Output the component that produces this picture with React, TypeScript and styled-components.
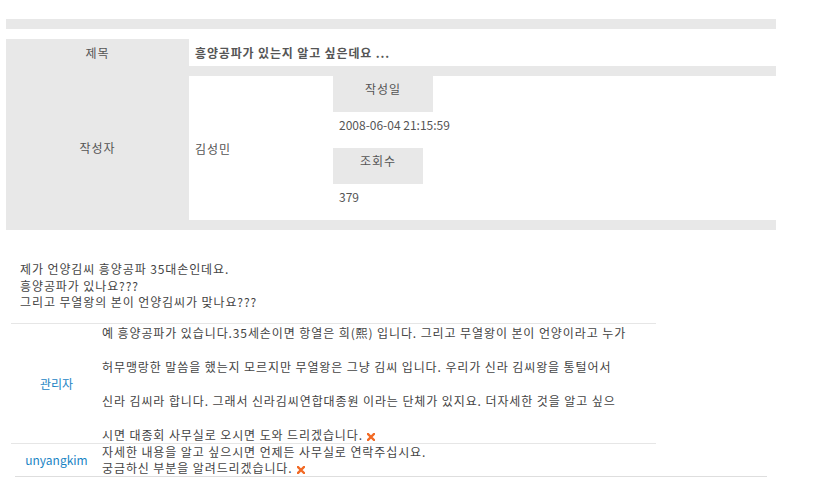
import React from "react";
import styled, { createGlobalStyle } from "styled-components";

const Global = createGlobalStyle`
  html, body { margin: 0; padding: 0; background: #fff; }
  body {
    font-family: "Noto Sans CJK KR", "Noto Sans", sans-serif;
    font-size: 12px;
    color: #444;
    letter-spacing: 0.9px;
  }
`;

const Page = styled.div`
  width: 815px;
  padding: 19px 0 0 6px;
  box-sizing: border-box;
`;

const TopBar = styled.div`
  width: 770px;
  height: 10px;
  background: #e8e8e8;
  margin-bottom: 10px;
`;

const InfoTable = styled.div`
  width: 770px;
  display: grid;
  grid-template-columns: 183px 1fr;
  grid-template-rows: 27px 10px 144px 10px;
  background: #e8e8e8;
`;

const Label = styled.div<{ $rows?: string }>`
  grid-column: 1;
  grid-row: ${(p) => p.$rows || "auto"};
  display: flex;
  align-items: center;
  justify-content: center;
  color: #555;
  line-height: 14px;
`;

const TitleCell = styled.div`
  grid-column: 2;
  grid-row: 1;
  background: #fff;
  display: flex;
  align-items: center;
  padding-left: 6px;
  font-weight: bold;
  color: #555;
  letter-spacing: 0.85px;
`;

const WriterCell = styled.div`
  grid-column: 2;
  grid-row: 3;
  background: #fff;
  display: flex;
`;

const WriterName = styled.div`
  width: 144px;
  box-sizing: border-box;
  padding-left: 6px;
  display: flex;
  align-items: center;
  color: #555;
`;

const MetaColumn = styled.div`
  display: flex;
  flex-direction: column;
`;

const MetaHead = styled.div<{ $w: number }>`
  width: ${(p) => p.$w}px;
  height: 36px;
  box-sizing: border-box;
  padding-top: 6px;
  line-height: 14px;
  text-align: center;
  background: #e8e8e8;
  color: #555;
`;

const MetaValue = styled.div`
  height: 36px;
  box-sizing: border-box;
  padding: 6px 0 0 6px;
  line-height: 14px;
  color: #555;
  letter-spacing: 0;
`;

const BodyText = styled.div`
  margin: 31px 0 0 14px;
  line-height: 16.5px;
  color: #444;
  height: 62px;
`;

const CommentList = styled.div`
  width: 645px;
  margin-left: 5px;
  border-top: 1px solid #e6e6e6;
`;

const CommentRow = styled.div<{ $lh: number }>`
  display: flex;
  line-height: ${(p) => p.$lh}px;
  & + & {
    border-top: 1px solid #e6e6e6;
  }
`;

const Author = styled.div`
  width: 91px;
  flex: none;
  display: flex;
  align-items: center;
  justify-content: center;
  color: #1b84c4;
  letter-spacing: 0;
`;

const CommentText = styled.div`
  white-space: pre;
  color: #444;
`;

const BottomLine = styled.div`
  width: 752px;
  height: 0;
  margin-left: 9px;
  border-top: 1px solid #dedede;
`;

const DelIcon = () => (
  <svg width="8" height="8" viewBox="0 0 8 8" style={{ marginLeft: 4, verticalAlign: "-1px" }}>
    <path d="M1 1 L7 7 M7 1 L1 7" stroke="#f26a25" strokeWidth="2.4" strokeLinecap="square" />
  </svg>
);

export default function App() {
  return (
    <Page>
      <Global />
      <TopBar />
      <InfoTable>
        <Label $rows="1">제목</Label>
        <TitleCell>흥양공파가 있는지 알고 싶은데요 ...</TitleCell>
        <Label $rows="2 / 5">작성자</Label>
        <WriterCell>
          <WriterName>김성민</WriterName>
          <MetaColumn>
            <MetaHead $w={100}>작성일</MetaHead>
            <MetaValue>2008-06-04 21:15:59</MetaValue>
            <MetaHead $w={90}>조회수</MetaHead>
            <MetaValue>379</MetaValue>
          </MetaColumn>
        </WriterCell>
      </InfoTable>
      <BodyText>
        제가 언양김씨 흥양공파 35대손인데요.
        <br />
        흥양공파가 있나요???
        <br />
        그리고 무열왕의 본이 언양김씨가 맞나요???
      </BodyText>
      <CommentList>
        <CommentRow $lh={17}>
          <Author>관리자</Author>
          <CommentText>
            {"예 흥양공파가 있습니다.35세손이면 항열은 희(熙) 입니다. 그리고 무열왕이 본이 언양이라고 누가\n\n허무맹랑한 말씀을 했는지 모르지만 무열왕은 그냥 김씨 입니다. 우리가 신라 김씨왕을 통털어서\n\n신라 김씨라 합니다. 그래서 신라김씨연합대종원 이라는 단체가 있지요. 더자세한 것을 알고 싶으\n\n시면 대종회 사무실로 오시면 도와 드리겠습니다."}
            <DelIcon />
          </CommentText>
        </CommentRow>
        <CommentRow $lh={16}>
          <Author>unyangkim</Author>
          <CommentText>
            {"자세한 내용을 알고 싶으시면 언제든 사무실로 연락주십시요.\n궁금하신 부분을 알려드리겠습니다."}
            <DelIcon />
          </CommentText>
        </CommentRow>
      </CommentList>
      <BottomLine />
    </Page>
  );
}
